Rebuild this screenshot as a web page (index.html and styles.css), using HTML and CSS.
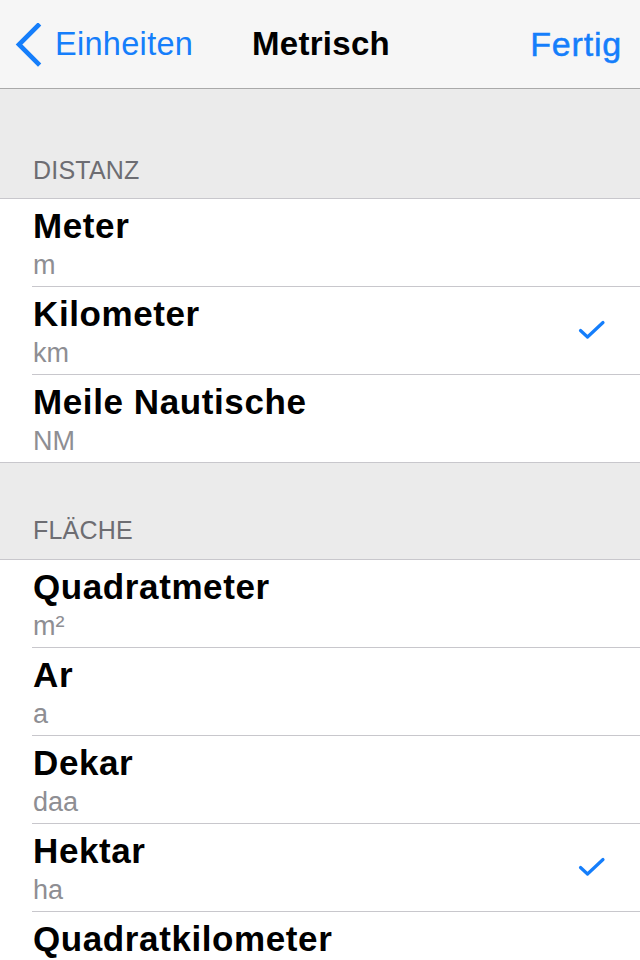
FILE: index.html
```html
<!DOCTYPE html>
<html lang="de">
<head>
<meta charset="utf-8">
<title>Metrisch</title>
<link rel="stylesheet" href="styles.css">
</head>
<body>
<div class="screen">
  <header class="nav">
    <div class="nav-back">
      <svg class="chevron" width="28" height="44" viewBox="0 0 28 44"><path d="M23 2.5 L4 21.5 L23 40.5" fill="none" stroke="#157efb" stroke-width="4.6" stroke-linecap="square"/></svg>
      <span>Einheiten</span>
    </div>
    <div class="nav-title">Metrisch</div>
    <div class="nav-done">Fertig</div>
  </header>

  <div class="section-head tall"><span>DISTANZ</span></div>
  <ul class="group">
    <li class="row"><div class="row-text"><div class="title">Meter</div><div class="sub">m</div></div></li>
    <li class="row"><div class="row-text"><div class="title">Kilometer</div><div class="sub">km</div></div>
      <svg class="check" width="28" height="22" viewBox="0 0 28 22"><path d="M2.5 10.5 L9.5 17 L25 2.5" fill="none" stroke="#157efb" stroke-width="3.2" stroke-linecap="round" stroke-linejoin="round"/></svg></li>
    <li class="row"><div class="row-text"><div class="title">Meile Nautische</div><div class="sub">NM</div></div></li>
  </ul>

  <div class="section-head"><span>FLÄCHE</span></div>
  <ul class="group">
    <li class="row"><div class="row-text"><div class="title">Quadratmeter</div><div class="sub">m²</div></div></li>
    <li class="row"><div class="row-text"><div class="title">Ar</div><div class="sub">a</div></div></li>
    <li class="row"><div class="row-text"><div class="title">Dekar</div><div class="sub">daa</div></div></li>
    <li class="row"><div class="row-text"><div class="title">Hektar</div><div class="sub">ha</div></div>
      <svg class="check" width="28" height="22" viewBox="0 0 28 22"><path d="M2.5 10.5 L9.5 17 L25 2.5" fill="none" stroke="#157efb" stroke-width="3.2" stroke-linecap="round" stroke-linejoin="round"/></svg></li>
    <li class="row"><div class="row-text"><div class="title">Quadratkilometer</div><div class="sub">km²</div></div></li>
  </ul>
</div>
</body>
</html>
```
FILE: styles.css
```css
html, body {
  margin: 0;
  padding: 0;
  background: #ebebeb;
}
body {
  font-family: "Liberation Sans", Arial, sans-serif;
  width: 640px;
  height: 960px;
  overflow: hidden;
}
.screen {
  width: 640px;
}
.nav {
  height: 88px;
  background: #f6f6f6;
  border-bottom: 1px solid #a9a9a9;
  display: grid;
  grid-template-columns: 1fr auto 1fr;
  align-items: center;
}
.nav-back {
  display: flex;
  align-items: center;
  color: #157efb;
  font-size: 32.5px;
  line-height: 88px;
  padding-left: 15px;
  letter-spacing: 0.3px;
}
.chevron {
  display: block;
  margin-right: 12px;
  margin-top: 1px;
}
.nav-title {
  font-size: 33px;
  font-weight: bold;
  color: #000;
  line-height: 88px;
  letter-spacing: 0.3px;
  padding-left: 2px;
}
.nav-done {
  justify-self: end;
  font-size: 34px;
  color: #157efb;
  line-height: 88px;
  padding-right: 18px;
  letter-spacing: 0.8px;
  -webkit-text-stroke: 0.5px #157efb;
}
.section-head {
  height: 96px;
  box-sizing: border-box;
  display: flex;
  align-items: flex-end;
  padding: 0 0 14px 33px;
  font-size: 25px;
  line-height: 30px;
  color: #6d6d72;
  letter-spacing: 0.2px;
}
.section-head.tall {
  height: 109px;
  padding-bottom: 13px;
}
.group {
  list-style: none;
  margin: 0;
  padding: 0;
  background: #fff;
  border-top: 1px solid #c8c7cc;
  border-bottom: 1px solid #c8c7cc;
}
.row {
  height: 88px;
  box-sizing: border-box;
  margin-left: 32px;
  padding-right: 32px;
  border-bottom: 1px solid #c8c7cc;
  display: flex;
  align-items: flex-start;
  justify-content: space-between;
}
.row:last-child {
  border-bottom: none;
  height: 87px;
}
.row-text {
  padding-left: 1px;
  padding-top: 7px;
}
.title {
  font-size: 35px;
  font-weight: bold;
  line-height: 40px;
  color: #000;
  letter-spacing: 0.6px;
}
.sub {
  font-size: 27px;
  line-height: 32px;
  margin-top: 3px;
  color: #8e8e93;
}
.check {
  display: block;
  margin-top: 33px;
  margin-right: 2px;
}
```
